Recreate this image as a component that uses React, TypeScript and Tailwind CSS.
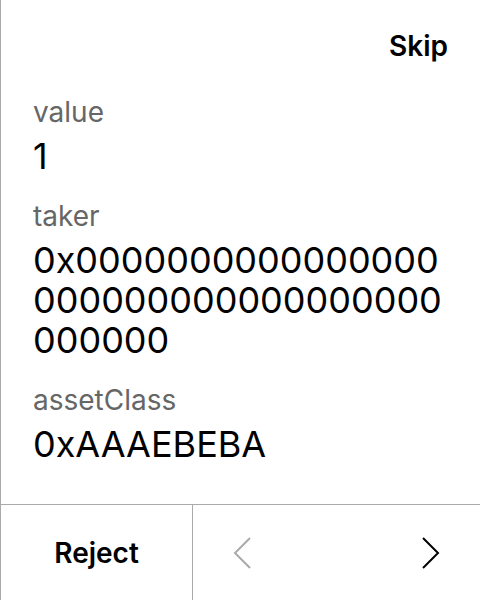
import React from 'react';

const Field: React.FC<{ label: string; value: string }> = ({ label, value }) => (
  <div className="flex flex-col">
    <span className="text-[28px] leading-8 text-[#666666]">{label}</span>
    <span className="mt-2 text-[36px] leading-10 text-black break-all">{value}</span>
  </div>
);

const ChevronLeft: React.FC<{ className?: string }> = ({ className }) => (
  <svg width="20" height="34" viewBox="0 0 20 34" fill="none" className={className}>
    <polyline points="17,2 2,17 17,32" stroke="currentColor" strokeWidth="2" />
  </svg>
);

const ChevronRight: React.FC<{ className?: string }> = ({ className }) => (
  <svg width="20" height="34" viewBox="0 0 20 34" fill="none" className={className}>
    <polyline points="3,2 18,17 3,32" stroke="currentColor" strokeWidth="2" />
  </svg>
);

export default function App() {
  const taker = '0x' + '0'.repeat(40);
  return (
    <div
      className="h-[600px] w-[480px] flex flex-col bg-white border-l border-[#aaaaaa] text-black"
      style={{ fontFamily: 'Inter, "Noto Sans", sans-serif' }}
    >
      <div className="flex-1 flex flex-col px-8">
        <div className="flex justify-end pt-[30px]">
          <button className="text-[28px] leading-8 font-semibold">Skip</button>
        </div>
        <div className="mt-[34px] flex flex-col gap-6">
          <Field label="value" value="1" />
          <Field label="taker" value={taker} />
          <Field label="assetClass" value="0xAAAEBEBA" />
        </div>
      </div>
      <div className="h-24 flex border-t border-[#aaaaaa]">
        <button className="w-[192px] flex items-center justify-center text-[28px] font-semibold border-r border-[#aaaaaa]">
          Reject
        </button>
        <div className="flex-1 flex items-center justify-between px-[40px]">
          <button className="text-[#aaaaaa]">
            <ChevronLeft />
          </button>
          <button className="text-black">
            <ChevronRight />
          </button>
        </div>
      </div>
    </div>
  );
}
